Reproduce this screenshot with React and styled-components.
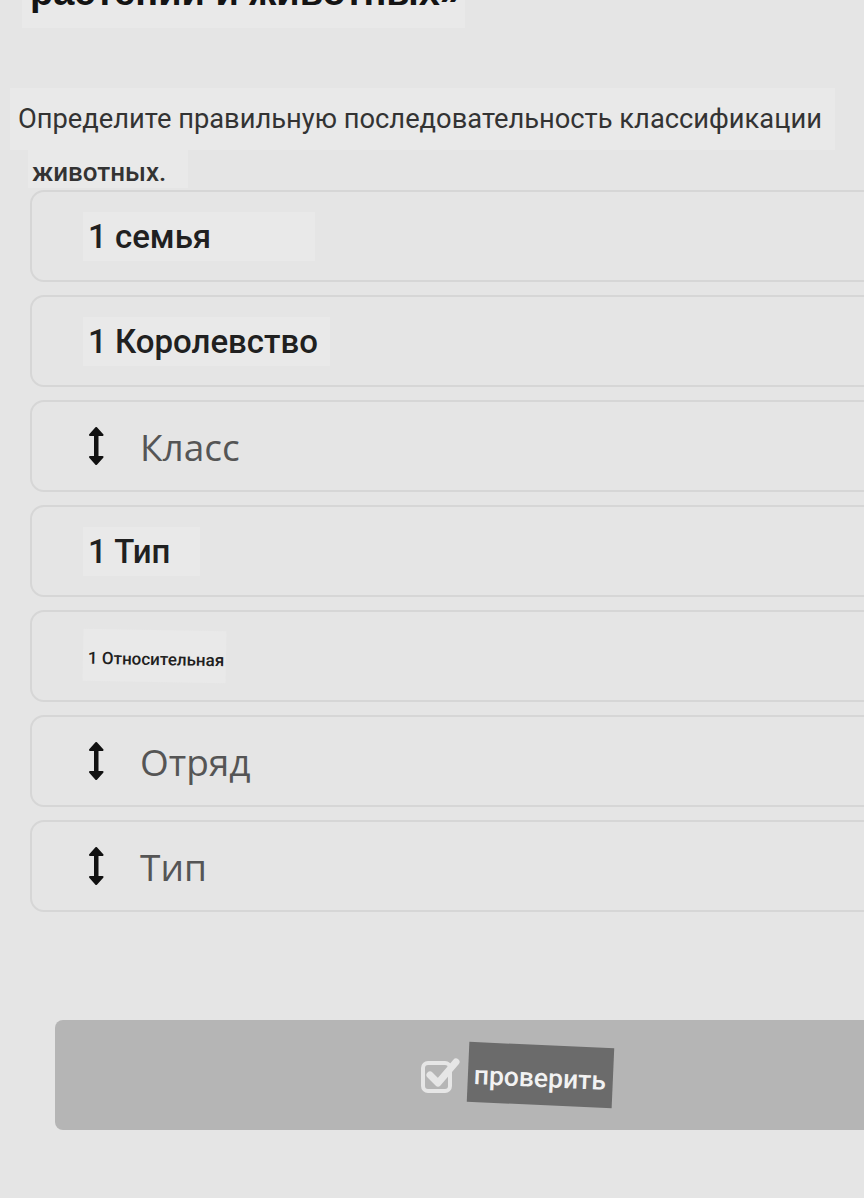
import styled, { createGlobalStyle } from 'styled-components';

const GlobalStyle = createGlobalStyle`
  html, body {
    margin: 0;
    padding: 0;
    background: #e5e5e5;
    overflow: hidden;
  }
`;

const Page = styled.div`
  width: 864px;
  height: 1198px;
  overflow: hidden;
  background: #e5e5e5;
  font-family: Roboto, 'Liberation Sans', sans-serif;
`;

const Title = styled.div`
  margin: -28px 0 0 22px;
  width: 443px;
  height: 56px;
  background: #e9e9e9;
  padding-left: 8px;
  box-sizing: border-box;
  font-family: 'Liberation Sans', Arial, sans-serif;
  font-weight: 700;
  font-size: 38px;
  line-height: 40px;
  color: #141414;
  white-space: nowrap;
`;

const Question = styled.div`
  margin: 60px 0 0 10px;
  width: 825px;
  height: 62px;
  background: #e9e9e9;
  display: flex;
  align-items: center;
  padding-left: 8px;
  box-sizing: border-box;
  font-family: Roboto, 'Liberation Sans', sans-serif;
  font-size: 27.3px;
  color: #333;
  white-space: nowrap;
`;

const QuestionTail = styled.div`
  margin-left: 28px;
  width: 160px;
  height: 38px;
  background: #e9e9e9;
  display: flex;
  align-items: center;
  padding: 6px 0 0 4px;
  box-sizing: border-box;
  font-family: Roboto, 'Liberation Sans', sans-serif;
  font-weight: 500;
  font-size: 26px;
  color: #333;
`;

const List = styled.div`
  margin: 2px 0 0 30px;
  display: flex;
  flex-direction: column;
  gap: 13px;
`;

const Card = styled.div`
  width: 860px;
  height: 92px;
  box-sizing: border-box;
  border: 2px solid #d6d6d6;
  border-radius: 14px;
  display: flex;
  align-items: center;
  padding-left: 51px;
`;

const Patch = styled.div`
  height: ${(p) => (p.$small ? 52 : 49)}px;
  width: ${(p) => p.$w}px;
  background: #e9e9e9;
  display: flex;
  align-items: center;
  padding-left: 5px;
  box-sizing: border-box;
  font-family: Roboto, 'Liberation Sans', sans-serif;
  font-weight: 500;
  font-size: ${(p) => (p.$small ? 17 : 33)}px;
  color: #202020;
  white-space: nowrap;
  ${(p) => p.$small && 'transform: rotate(1deg); padding-top: 6px;'}
`;

const Draggable = styled.div`
  display: flex;
  align-items: center;
  gap: 36px;
  padding-left: 5px;
  font-family: 'Open Sans', 'Noto Sans', sans-serif;
  font-size: 37px;
  color: #555;
`;

const ButtonWrap = styled.div`
  margin: 108px 0 0 55px;
`;

const Button = styled.div`
  width: 840px;
  height: 110px;
  background: #b5b5b5;
  border-radius: 8px;
  display: flex;
  align-items: center;
  gap: 7px;
  padding-left: 366px;
  box-sizing: border-box;
`;

const Label = styled.div`
  width: 145px;
  height: 60px;
  background: #6b6b6b;
  color: #f2f2f2;
  font-family: Roboto, 'Liberation Sans', sans-serif;
  font-weight: 500;
  font-size: 26.5px;
  display: flex;
  align-items: center;
  padding: 4px 0 0 6px;
  box-sizing: border-box;
  transform: rotate(2.5deg);
`;

function Arrow() {
  return (
    <svg width="16" height="38" viewBox="0 0 16 38">
      <rect x="6" y="6" width="4.5" height="26" fill="#111" />
      <path d="M8.2 1 L14.5 8 L2 8 Z" fill="#111" stroke="#111" strokeLinejoin="round" strokeWidth="2" />
      <path d="M8.2 37 L14.5 30 L2 30 Z" fill="#111" stroke="#111" strokeLinejoin="round" strokeWidth="2" />
    </svg>
  );
}

function CheckIcon() {
  return (
    <svg width="40" height="38" viewBox="0 0 40 38">
      <rect x="2" y="7" width="27" height="28" rx="5" fill="none" stroke="#e6e6e6" strokeWidth="4" />
      <path d="M9 19 L17 27 L35 6" fill="none" stroke="#e6e6e6" strokeWidth="7" strokeLinecap="round" strokeLinejoin="round" />
    </svg>
  );
}

const items = [
  { type: 'patch', text: '1 семья', w: 232 },
  { type: 'patch', text: '1 Королевство', w: 247 },
  { type: 'drag', text: 'Класс' },
  { type: 'patch', text: '1 Тип', w: 117 },
  { type: 'small', text: '1 Относительная', w: 143 },
  { type: 'drag', text: 'Отряд' },
  { type: 'drag', text: 'Тип' },
];

export default function App() {
  return (
    <Page>
      <GlobalStyle />
      <Title>растений и животных»</Title>
      <Question>Определите правильную последовательность классификации</Question>
      <QuestionTail>животных.</QuestionTail>
      <List>
        {items.map((it, i) => (
          <Card key={i}>
            {it.type === 'drag' ? (
              <Draggable>
                <Arrow />
                <span>{it.text}</span>
              </Draggable>
            ) : (
              <Patch $w={it.w} $small={it.type === 'small'}>
                {it.text}
              </Patch>
            )}
          </Card>
        ))}
      </List>
      <ButtonWrap>
        <Button>
          <CheckIcon />
          <Label>проверить</Label>
        </Button>
      </ButtonWrap>
    </Page>
  );
}
